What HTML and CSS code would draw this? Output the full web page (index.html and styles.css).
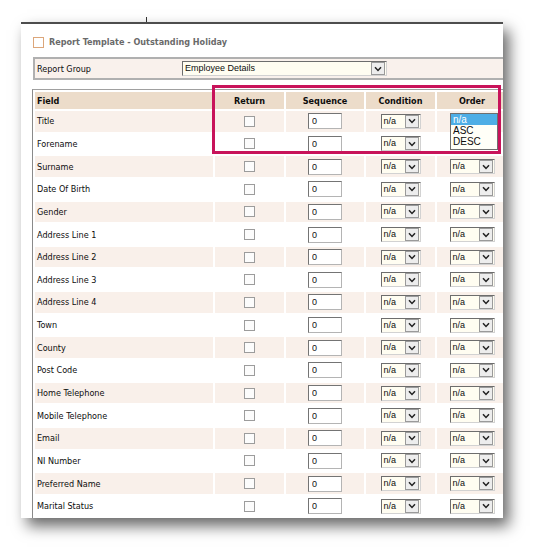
FILE: index.html
```html
<!DOCTYPE html>
<html lang="en">
<head>
<meta charset="utf-8">
<title>Report Template - Outstanding Holiday</title>
<link rel="stylesheet" href="styles.css">
</head>
<body>
<div class="shot">
  <span class="tick"></span>
  <div class="panel">
    <div class="title"><span class="ico"></span><span>Report Template - Outstanding Holiday</span></div>
    <div class="group">
      <span class="glabel">Report Group</span>
      <span class="sel wide"><span class="v">Employee Details</span><span class="b"><svg width="8" height="6" viewBox="0 0 8 6"><polyline points="1,1.2 4,4.4 7,1.2" fill="none" stroke="#222" stroke-width="1.5"/></svg></span></span>
    </div>
    <table class="grid">
      <colgroup><col class="c1"><col class="c2"><col class="c3"><col class="c4"><col class="c5"></colgroup>
      <thead>
        <tr><th class="fld">Field</th><th>Return</th><th>Sequence</th><th>Condition</th><th>Order</th></tr>
      </thead>
      <tbody id="rows"></tbody>
    </table>
    <div class="highlight"></div>
  </div>
</div>
<script src="app.js"></script>
</body>
</html>
```
FILE: app.js
```js
const fields = ["Title","Forename","Surname","Date Of Birth","Gender","Address Line 1","Address Line 2","Address Line 3","Address Line 4","Town","County","Post Code","Home Telephone","Mobile Telephone","Email","NI Number","Preferred Name","Marital Status"];
const chev = '<svg width="8" height="6" viewBox="0 0 8 6"><polyline points="1,1.2 4,4.4 7,1.2" fill="none" stroke="#222" stroke-width="1.5"/></svg>';
const sel = cls => `<span class="sel ${cls}"><span class="v">n/a</span><span class="b">${chev}</span></span>`;
const body = document.getElementById("rows");
body.innerHTML = fields.map((f, i) => {
  let order = sel("ord");
  if (i === 0) order = `<div class="list"><div class="opt on">n/a</div><div class="opt">ASC</div><div class="opt">DESC</div></div>`;
  if (i === 1) order = "";
  return `<tr class="${i % 2 === 0 ? "odd" : "even"}">
    <td class="fld">${f}</td>
    <td><span class="cb"></span></td>
    <td><input class="num" type="text" value="0"></td>
    <td>${sel("cond")}</td>
    <td class="ocell">${order}</td>
  </tr>`;
}).join("");
```
FILE: styles.css
```css
html, body { margin: 0; padding: 0; background: #fff; }
body { font-family: "DejaVu Sans Condensed", "DejaVu Sans", sans-serif; font-size: 9px; color: #0d0d0d; }
.shot { position: relative; width: 545px; height: 560px; overflow: hidden; }
.tick { position: absolute; left: 146px; top: 17px; width: 1px; height: 6px; background: #333; }
.panel {
  position: relative;
  margin: 22px 0 0 21px;
  width: 482px;
  height: 494px;
  border-top: 2px solid #4d4d4d;
  background: #fff;
  overflow: hidden;
  box-shadow: 6px 8px 14px rgba(0,0,0,0.6);
}
.title { display: flex; align-items: center; gap: 5px; padding: 12px 0 0 12px; height: 12px; font-weight: bold; color: #6a6a6a; font-size: 9px; }
.ico { width: 9px; height: 9px; border: 1px solid #dca67a; background: #fff; }
.group {
  margin: 9px 0 0 12px;
  width: 480px;
  height: 19px;
  border: 2px solid #b0b0b0;
  border-right: none;
  background: #f9f1ec;
  display: grid;
  grid-template-columns: 147px 205px;
  align-items: center;
}
.glabel { padding-left: 2px; }
.sel {
  display: inline-flex;
  box-sizing: border-box;
  height: 15px;
  border: 1px solid;
  border-color: #6d6d6d #d2d2d2 #d2d2d2 #6d6d6d;
  background: #fffdf1;
  font-family: "Liberation Sans", Arial, sans-serif;
  font-size: 9px;
  text-align: left;
  vertical-align: middle;
}
.sel .v { flex: 1; padding-left: 2px; line-height: 13px; white-space: nowrap; overflow: hidden; }
.sel .b {
  width: 14px;
  margin: 0 1px 0 0;
  border: 1px solid #9a9a9a;
  box-sizing: border-box;
  background: #ededed;
  display: flex; align-items: center; justify-content: center;
}
.sel.wide { width: 205px; }
.sel.cond { width: 40px; }
.sel.ord { width: 45px; }
.grid {
  margin: 9px 0 0 11px;
  border: 1px solid #a0a0a0;
  border-left: 1px solid #8a8a8a;
  border-spacing: 2px;
  table-layout: fixed;
  width: 478px;
}
.c1 { width: 178px; } .c2 { width: 69px; } .c3 { width: 78px; } .c4 { width: 69px; } .c5 { width: 70px; }
.grid th { height: 17px; padding: 0; background: #ecdcca; font-weight: bold; text-align: center; }
.grid th.fld { text-align: left; padding-left: 2px; }
.grid td { height: 20.65px; padding: 0; text-align: center; vertical-align: middle; }
.grid td.fld { text-align: left; padding-left: 2px; }
.grid tr.odd td { background: #f9f0ea; }
.grid tr.even td { background: #fff; }
.cb { display: inline-block; vertical-align: middle; width: 11px; height: 11px; box-sizing: border-box; border: 1px solid #9c9c9c; background: #fcfcfc; }
.num {
  box-sizing: border-box; width: 34px; height: 16px; margin: 0; padding: 0 0 0 3px;
  border: 1px solid; border-color: #747474 #b4b4b4 #b4b4b4 #747474;
  background: #fff; font-family: "Liberation Sans", Arial, sans-serif; font-size: 9px; color: #111;
  vertical-align: middle;
}
.ocell { position: relative; }
.list {
  position: absolute; left: 13px; top: 2px; width: 48px; height: 37px; box-sizing: border-box;
  border: 1px solid #6f6f6f; background: #fffff8; text-align: left;
  font-family: "Liberation Sans", Arial, sans-serif; font-size: 10px; z-index: 2;
}
.opt { height: 11px; line-height: 11px; padding-left: 2px; }
.opt.on { background: #4eaee6; color: #fff; }
.highlight { position: absolute; left: 191px; top: 61px; width: 289px; height: 69px; box-sizing: border-box; border: 3px solid #c8135a; z-index: 3; }
```
